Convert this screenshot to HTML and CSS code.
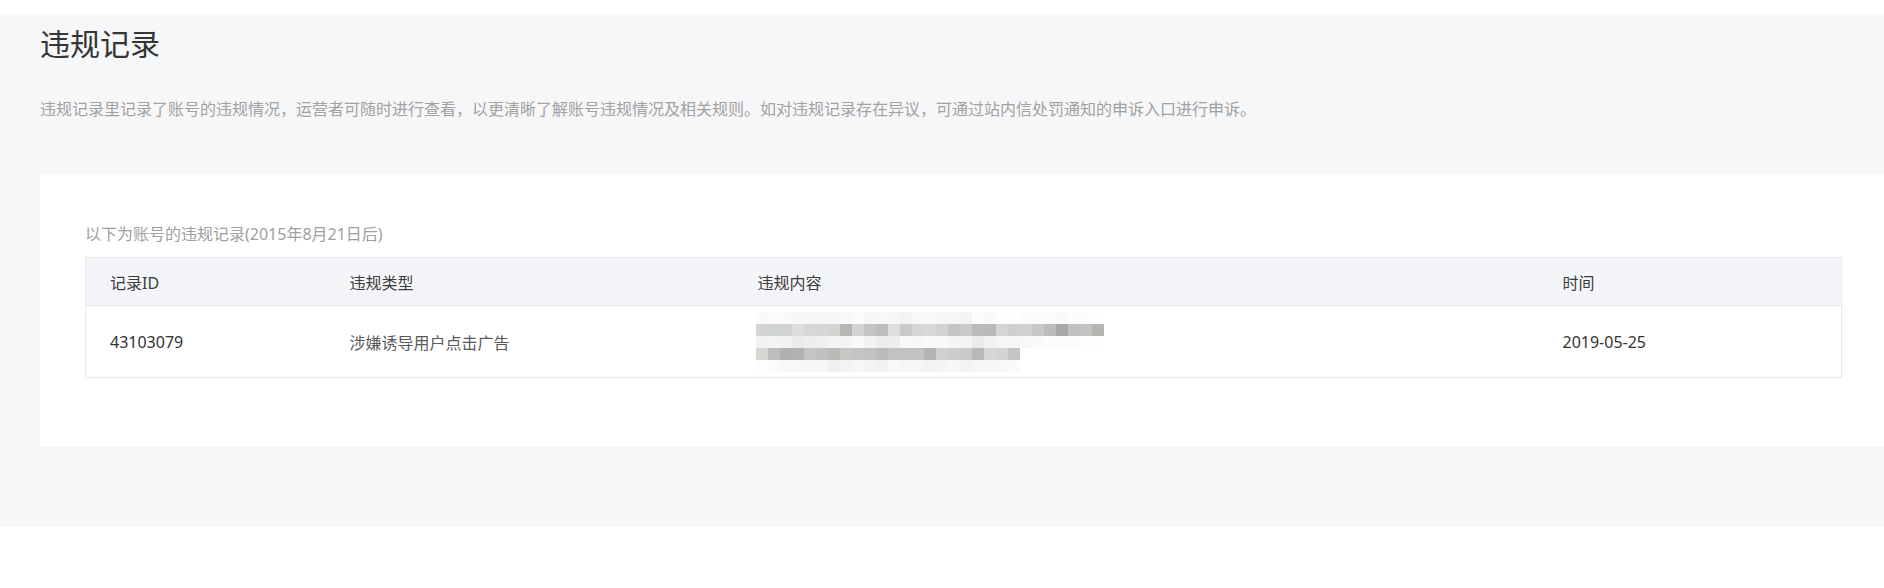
FILE: index.html
```html
<!DOCTYPE html>
<html lang="zh-CN">
<head>
    <meta charset="UTF-8">
    <meta name="viewport" content="width=device-width, initial-scale=1.0">
    <title>违规记录</title>
    <link rel="stylesheet" href="styles.css">
</head>
<body>
    <div class="page">
        <h2 class="page-title">违规记录</h2>
        <p class="page-desc">违规记录里记录了账号的违规情况，运营者可随时进行查看，以更清晰了解账号违规情况及相关规则。如对违规记录存在异议，可通过站内信处罚通知的申诉入口进行申诉。</p>

        <div class="card">
            <div class="card-label">以下为账号的违规记录(2015年8月21日后)</div>
            <table class="record-table">
                <colgroup>
                    <col style="width: 240px">
                    <col style="width: 408px">
                    <col style="width: 805px">
                    <col>
                </colgroup>
                <thead>
                    <tr>
                        <th>记录ID</th>
                        <th>违规类型</th>
                        <th>违规内容</th>
                        <th>时间</th>
                    </tr>
                </thead>
                <tbody>
                    <tr>
                        <td class="num">43103079</td>
                        <td class="type">涉嫌诱导用户点击广告</td>
                        <td><div class="mosaic" id="mosaic"></div></td>
                        <td class="num">2019-05-25</td>
                    </tr>
                </tbody>
            </table>
        </div>
    </div>

    <script>
        // masked content: each row is a strip of 12px cells, values are grey levels
        const mosaicRows = [
            'fafafa fbfbfb fafafa f6f6f6 f7f7f7 f7f7f6 f7f7f6 f8f8f8 fcfcfc f7f7f7 f8f8f8 f6f6f6 f4f4f4 f8f8f8 f8f8f8 f5f6f5 f6f6f6 f4f4f4 fcfcfc fafafa fdfdfd fefefe fbfbfb fbfbfb fbfbfb fafafa fcfcfc fcfcfc fdfdfd',
            'd4d4d2 cfd4d6 d2d2d0 dcdddd d9d7d6 d6d6d4 d4d4d2 b7b8b4 d4d4d2 c4c4c2 bebebc dededc cacaca d6d6d4 d8d8d6 d2d3d0 c4c4c2 cacac8 bbbbb9 bbb9bb d4d6d6 cfcfcd d0d0ce c8c8c6 bcbcbc a8a8a6 c0c0c0 c4c2c4 b6b6b0',
            'f2f2f2 f3f3f3 f2f2f2 ebebeb eeeeee efefef f4f4f4 f5f5f5 fafaf8 f2f2f0 ececec eeeeee f8f8f6 f7f7f5 f9f9f7 f8f8f8 f5f5f5 f3f3f3 ebebeb f1f1f1 f5f6f6 f7f7f7 f8f8f8 fafafa fcfcfc fbfbfb fcfcfc fdfdfd fdfdfd',
            'd6d6d2 bdbdbd b0b0b0 aeb2b4 c4c4c4 c0c2c2 b8bbb6 c6c6c4 c4c4c2 c2c2c0 bcbcbc c2c2c0 c2c2c0 c2c2c0 b2b4b2 d0d0ce cdcdcb cacac8 b8b8bc d6d6d6 d4d4d4 c4c4c4',
            'fdfdfd fbfbfb f8f8f8 f8f8f8 f7f7f7 f6f6f6 eff0ef f4f4f4 f6f6f6 f3f3f3 f1f1f1 f8f8f8 f6f6f6 f6f6f6 f3f3f3 f5f5f5 f7f7f7 f4f4f4 f6f6f6 f7f7f7 f8f8f8 fafafa'
        ];

        const mosaic = document.getElementById('mosaic');
        mosaicRows.forEach(row => {
            const line = document.createElement('div');
            line.className = 'mosaic-row';
            row.split(' ').forEach(shade => {
                const cell = document.createElement('span');
                cell.className = 'mosaic-cell';
                cell.style.background = '#' + shade;
                line.appendChild(cell);
            });
            mosaic.appendChild(line);
        });
    </script>
</body>
</html>
```

FILE: styles.css
```css
body {
    margin: 0;
    background: #fff;
    font-family: "Noto Sans", "Noto Sans CJK SC", sans-serif;
    color: #333;
    overflow: hidden;
}

.page {
    margin-top: 14px;
    background: #f6f7f9;
    padding: 9px 0 80px 40px;
}

.page-title {
    margin: 0;
    font-size: 30px;
    font-weight: normal;
    line-height: 42px;
    color: #353535;
}

.page-desc {
    margin: 32px 0 53px;
    font-size: 16px;
    line-height: 24px;
    color: #a2a2a2;
}

.card {
    background: #fff;
    padding: 48px 42px 69px 45px;
}

.card-label {
    font-size: 16px;
    line-height: 24px;
    color: #a0a0a0;
    margin-bottom: 11px;
}

.record-table {
    width: 100%;
    table-layout: fixed;
    border-collapse: collapse;
    border: 1px solid #e7e9ed;
    font-size: 16px;
}

.record-table th {
    background: #f4f5f8;
    height: 47px;
    padding: 0 0 0 24px;
    text-align: left;
    font-weight: normal;
    color: #3c3c3c;
    border-bottom: 1px solid #e4e6ea;
}

.record-table td {
    height: 71px;
    padding: 0 0 0 24px;
    color: #333;
    vertical-align: middle;
}

.record-table td.type {
    color: #5a5a5a;
}

.mosaic {
    margin-left: -2px;
    display: flex;
    flex-direction: column;
}

.mosaic-row {
    display: flex;
    height: 12px;
}

.mosaic-cell {
    width: 12px;
    height: 12px;
}
```
